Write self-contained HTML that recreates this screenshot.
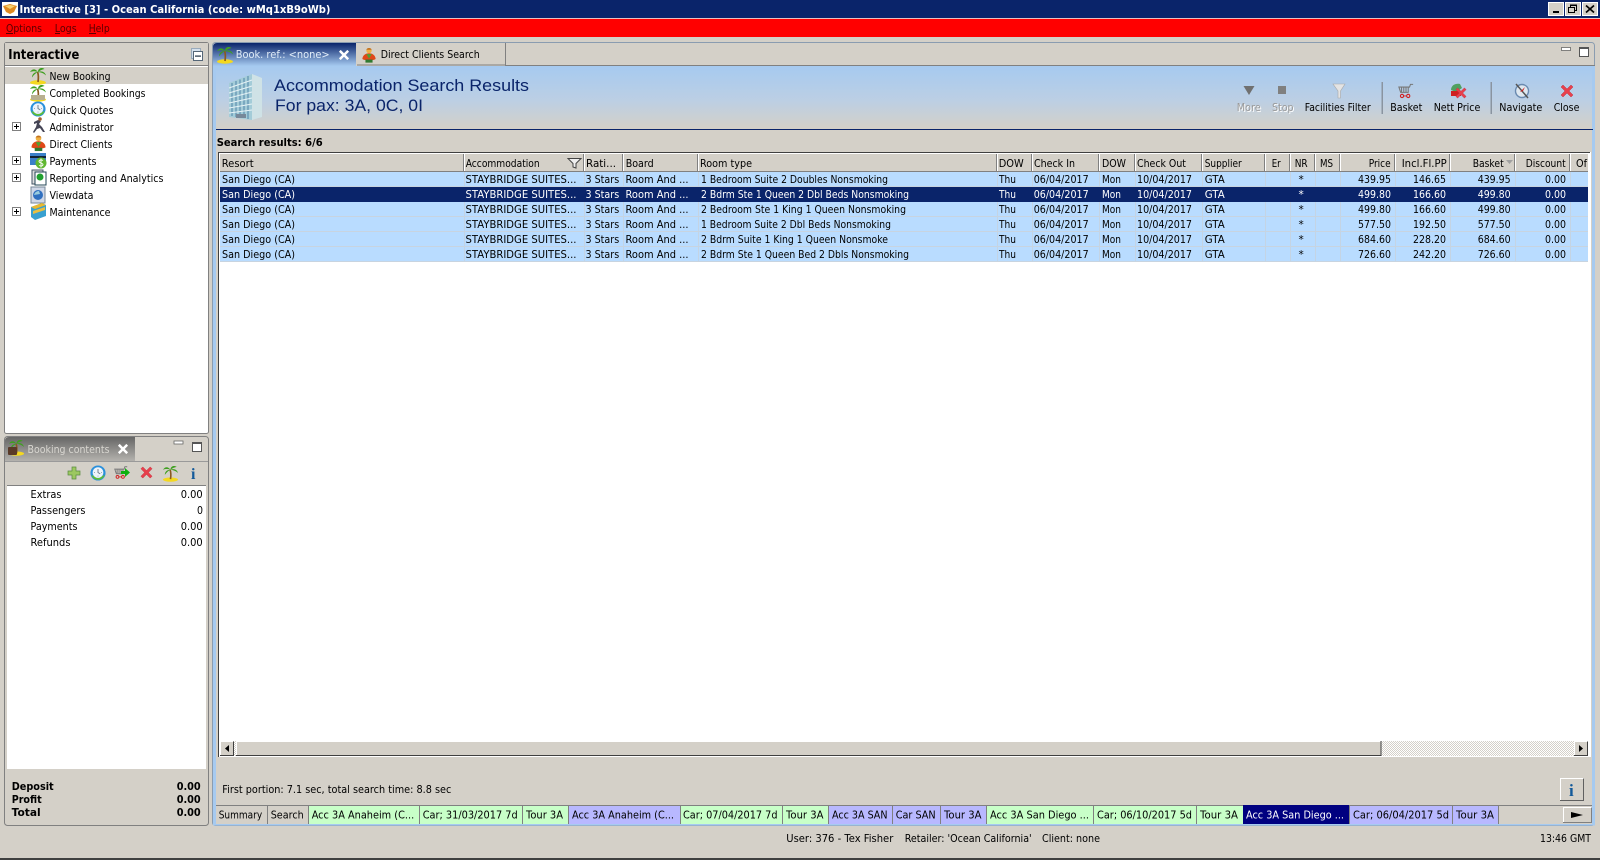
<!DOCTYPE html>
<html lang="en">
<head>
<meta charset="utf-8">
<title>Interactive [3] - Ocean California</title>
<style>
html,body{margin:0;padding:0;background:#d4d0c8;width:1600px;height:860px;overflow:hidden}
svg{display:block}
text{font-family:"DejaVu Sans","Liberation Sans",sans-serif;font-size:10.5px;fill:#000}
.b{font-weight:bold}
</style>
</head>
<body>
<svg xmlns="http://www.w3.org/2000/svg" width="1600" height="860" viewBox="0 0 1600 860">
<defs>
<linearGradient id="bn" x1="0" y1="0" x2="0" y2="1"><stop offset="0" stop-color="#a6caf0"/><stop offset=".55" stop-color="#bccfe4"/><stop offset="1" stop-color="#d4d0c8"/></linearGradient>
<linearGradient id="tb" x1="0" y1="0" x2="0" y2="1"><stop offset="0" stop-color="#0a246a"/><stop offset="1" stop-color="#a6caf0"/></linearGradient>
<linearGradient id="tg" x1="0" y1="0" x2="0" y2="1"><stop offset="0" stop-color="#666"/><stop offset="1" stop-color="#b4b2ae"/></linearGradient>
<pattern id="dit" width="2" height="2" patternUnits="userSpaceOnUse"><rect width="2" height="2" fill="#fff"/><rect width="1" height="1" fill="#d4d0c8"/><rect x="1" y="1" width="1" height="1" fill="#d4d0c8"/></pattern>
<symbol id="palm" viewBox="0 0 18 18"><ellipse cx="9" cy="15.5" rx="8" ry="2.2" fill="#f4d820"/><path d="M9 15C9.6 11 9.6 8 8.6 5" stroke="#8a5a20" stroke-width="1.7" fill="none"/><path d="M9 5C6 1 3 2 1 5C4 4 6 4 9 5ZM9 5C9 1 13 0 15.5 2C13 2.5 11 3.5 9 5ZM9 5C12 3.5 16 4.5 17 8.5C14.5 6 12 5.5 9 5ZM9 5C6 5 3 6.5 3 10.5C5 7.5 7 6 9 5Z" fill="#3f9f20"/></symbol>
<symbol id="clock" viewBox="0 0 18 18"><circle cx="9" cy="9" r="8.500" fill="#2a90dc"/><path d="M1.500 11A7.800 7.800 0 0 0 16.500 11L13 13A5.500 5.500 0 0 1 5 13Z" fill="#60c030"/><circle cx="9" cy="8.500" r="6" fill="#eef4fa"/><path d="M9 4.500V8.500L11.500 10" stroke="#678" stroke-width="1" fill="none"/><path d="M4.500 8.500h1M12.500 8.500h1M9 12v1" stroke="#89a"/></symbol>
<symbol id="rx" viewBox="0 0 14 14"><path d="M1 3L3 1L7 5L11 1L13 3L9 7L13 11L11 13L7 9L3 13L1 11L5 7Z" fill="#e8404c" stroke="#c03040" stroke-width=".5"/></symbol>
<symbol id="client" viewBox="0 0 18 18"><circle cx="9" cy="3.500" r="3" fill="#f0b040"/><path d="M6 2.500C7 0 11 0 12 2.500Z" fill="#c07020"/><path d="M1.500 13C2 8 6 6.500 9 6.500C12 6.500 16 8 16.500 13C14 15 4 15 1.500 13Z" fill="#e04818"/><path d="M6 7.500L9 12.500L12 7.500Z" fill="#50a030"/><rect x="5" y="13.500" width="8" height="3.500" fill="#307a30"/></symbol>
<symbol id="wx" viewBox="0 0 12 12"><path d="M2 2L10 10M10 2L2 10" stroke="#fff" stroke-width="3" stroke-linecap="square" fill="none"/></symbol>
<symbol id="cart" viewBox="0 0 18 18"><path d="M17 1H14L13 4H1L3 10H12" fill="none" stroke="#777" stroke-width="1.200"/><path d="M4 4.500V9.500M6.500 4.500V9.500M9 4.500V9.500M11.500 4.500V9.500" stroke="#777" stroke-width="1.200"/><circle cx="4.500" cy="14" r="1.800" fill="none" stroke="#d02020" stroke-width="1.200"/><circle cx="11.500" cy="14" r="1.800" fill="none" stroke="#d02020" stroke-width="1.200"/><path d="M6.300 14H9.700" stroke="#d02020"/></symbol>
</defs>

<rect width="1600" height="860" fill="#d4d0c8"/>

<!-- title bar -->
<rect width="1600" height="18" fill="#0a246a"/>
<rect y="18" width="1600" height="1" fill="#e8c0c0"/>
<rect x="2" y="2" width="16" height="14" fill="#fff"/>
<path d="M3 6L10 4L17 6L14 12L10 14L6 12Z" fill="#e08a20"/><path d="M5 6L10 5L15 6L10 9Z" fill="#f8d070"/>
<text class="b" x="19.500" y="13" textLength="311" lengthAdjust="spacingAndGlyphs" style="fill:#fff">Interactive [3] - Ocean California (code: wMq1xB9oWb)</text>
<g>
<rect x="1548.500" y="2.500" width="15" height="13" fill="#d4d0c8" stroke="#fff"/><rect x="1553" y="11" width="6" height="2" fill="#000"/>
<rect x="1565.500" y="2.500" width="15" height="13" fill="#d4d0c8" stroke="#fff"/><path d="M1570.500 5.500h6v5h-2M1570.500 5.500v2M1568.500 7.500h6v5h-6Z" fill="none" stroke="#000"/><rect x="1570" y="4.500" width="7" height="1.500"/>
<rect x="1582.500" y="2.500" width="15" height="13" fill="#d4d0c8" stroke="#fff"/><path d="M1586 5.500L1594 12.500M1594 5.500L1586 12.500" stroke="#000" stroke-width="1.700"/>
</g>

<!-- menu -->
<rect y="19" width="1600" height="18" fill="#ff0000"/>
<text x="6" y="32" textLength="36" lengthAdjust="spacingAndGlyphs" style="fill:#5a0000">Options</text>
<text x="54.700" y="32" textLength="22" lengthAdjust="spacingAndGlyphs" style="fill:#5a0000">Logs</text>
<text x="88.700" y="32" textLength="21" lengthAdjust="spacingAndGlyphs" style="fill:#5a0000">Help</text>
<rect x="6" y="33" width="7" height="1" fill="#5a0000"/><rect x="55" y="33" width="5" height="1" fill="#5a0000"/><rect x="89" y="33" width="7" height="1" fill="#5a0000"/>

<!-- left top panel -->
<rect x="4.500" y="42.500" width="204" height="391" rx="2" fill="#fff" stroke="#808080"/>
<rect x="5" y="43" width="203" height="22" fill="#d4d0c8"/>
<rect x="5" y="65" width="203" height="1" fill="#808080"/>
<text class="b" x="8.300" y="59" textLength="71" lengthAdjust="spacingAndGlyphs" style="font-size:13px">Interactive</text>
<rect x="191.500" y="48.500" width="9" height="10" fill="#d4e0ec" stroke="#9ab"/>
<rect x="193.500" y="51.500" width="9" height="9" fill="#fff" stroke="#567"/><rect x="195" y="55.500" width="6" height="1.200" fill="#234"/>
<rect x="5" y="67" width="203" height="17" fill="#d4d0c8"/>
<use href="#palm" x="29" y="67" width="18" height="18"/>
<use href="#palm" x="29" y="84" width="18" height="18"/><rect x="31" y="95" width="14" height="5" fill="#b8b090"/>
<use href="#clock" x="30" y="101" width="16" height="16"/>
<path d="M38 120l3 1-2 3 3 3 3 5-2 0-3-4-3 1-3 4-1-1 3-5 1-4-3 1 0-2 4-2Z" fill="#445"/><circle cx="40" cy="119" r="1.800" fill="#a06030"/>
<use href="#client" x="30" y="135" width="17" height="17"/>
<rect x="30" y="153" width="16" height="12" fill="#3a80c8"/><rect x="30" y="156" width="16" height="2" fill="#123"/><circle cx="41" cy="163" r="5.500" fill="#60b830"/><path d="M43 160.500C41 159.500 39 160 39 161.500C39 163 43 163 43 164.500C43 166 41 166.500 39 165.500M41 158.500V167.500" stroke="#fff" fill="none" stroke-width=".9"/>
<rect x="32" y="170" width="11" height="14" fill="#ddd" stroke="#456"/><rect x="35" y="172" width="11" height="13" fill="#fff" stroke="#245"/><circle cx="40" cy="177" r="3.500" fill="#20a030"/>
<rect x="31" y="187" width="14" height="16" fill="#d0d8e8" stroke="#789"/><circle cx="38" cy="195" r="5" fill="#3070c0"/><path d="M34 195a5 5 0 0 1 5-4l1 3Z" fill="#9cd"/>
<path d="M31 207L42 203L46 205V216L35 220L31 217Z" fill="#38a0d0"/><path d="M31 207L42 203L46 205L35 209Z" fill="#e8b830"/><path d="M33 211L45 207V210L33 214Z" fill="#e8c040"/>
<g>
<text x="49.500" y="80" textLength="61" lengthAdjust="spacingAndGlyphs">New Booking</text>
<text x="49.500" y="97" textLength="96" lengthAdjust="spacingAndGlyphs">Completed Bookings</text>
<text x="49.500" y="114" textLength="64" lengthAdjust="spacingAndGlyphs">Quick Quotes</text>
<text x="49.500" y="131" textLength="64" lengthAdjust="spacingAndGlyphs">Administrator</text>
<text x="49.500" y="148" textLength="63" lengthAdjust="spacingAndGlyphs">Direct Clients</text>
<text x="49.500" y="165" textLength="47" lengthAdjust="spacingAndGlyphs">Payments</text>
<text x="49.500" y="182" textLength="114" lengthAdjust="spacingAndGlyphs">Reporting and Analytics</text>
<text x="49.500" y="199" textLength="44" lengthAdjust="spacingAndGlyphs">Viewdata</text>
<text x="49.500" y="216" textLength="61" lengthAdjust="spacingAndGlyphs">Maintenance</text>
</g>
<g fill="#fff" stroke="#808080">
<rect x="12.500" y="122.500" width="8" height="8"/><rect x="12.500" y="156.500" width="8" height="8"/><rect x="12.500" y="173.500" width="8" height="8"/><rect x="12.500" y="207.500" width="8" height="8"/>
</g>
<path d="M14 126.500h5M16.500 124v5M14 160.500h5M16.500 158v5M14 177.500h5M16.500 175v5M14 211.500h5M16.500 209v5" stroke="#000"/>

<!-- left bottom panel -->
<rect x="4.500" y="436.500" width="204" height="389" rx="3" fill="#d4d0c8" stroke="#808080"/>
<path d="M5 461V441Q5 437 9 437H135V461Z" fill="url(#tg)"/>
<rect x="5" y="461" width="203" height="1" fill="#9a9a9a"/>
<rect x="174" y="441" width="9" height="3" fill="#fff" stroke="#666" stroke-width=".8"/>
<rect x="192.500" y="442.500" width="9" height="9" fill="#fff" stroke="#555"/><rect x="192" y="442" width="10" height="2" fill="#555"/>
<use href="#palm" x="8" y="439" width="17" height="17"/><rect x="8" y="447" width="9" height="8" rx="1" fill="#5a3a28"/>
<text x="27.500" y="453" textLength="82" lengthAdjust="spacingAndGlyphs" style="fill:#d8d6d0">Booking contents</text>
<use href="#wx" x="118" y="444" width="10" height="10"/>
<rect x="7" y="485" width="199" height="1" fill="#808080"/>
<path d="M72 467h4v4h4v4h-4v4h-4v-4h-4v-4h4Z" fill="#9cc860" stroke="#5a8a40" stroke-width=".7"/>
<use href="#clock" x="90" y="465" width="16" height="16"/>
<use href="#cart" x="114" y="465" width="14" height="16"/><path d="M121 471h4v-3l5 4.500-5 4.500v-3h-4Z" fill="#10b010"/>
<use href="#rx" x="140" y="466" width="13" height="13"/>
<use href="#palm" x="162" y="465" width="17" height="17"/>
<text x="191" y="479" class="b" style="font-family:'Liberation Serif',serif;font-size:16px;fill:#145a9a">i</text>
<rect x="7" y="486" width="199" height="283" fill="#fff"/>
<text x="30.500" y="498" textLength="31" lengthAdjust="spacingAndGlyphs">Extras</text>
<text x="30.500" y="514" textLength="55" lengthAdjust="spacingAndGlyphs">Passengers</text>
<text x="30.500" y="530" textLength="47" lengthAdjust="spacingAndGlyphs">Payments</text>
<text x="30.500" y="546" textLength="40" lengthAdjust="spacingAndGlyphs">Refunds</text>
<text x="180.700" y="498" textLength="22" lengthAdjust="spacingAndGlyphs">0.00</text>
<text x="197" y="514" textLength="6" lengthAdjust="spacingAndGlyphs">0</text>
<text x="180.700" y="530" textLength="22" lengthAdjust="spacingAndGlyphs">0.00</text>
<text x="180.700" y="546" textLength="22" lengthAdjust="spacingAndGlyphs">0.00</text>
<text class="b" x="11.700" y="790" textLength="42" lengthAdjust="spacingAndGlyphs">Deposit</text>
<text class="b" x="11.700" y="803" textLength="30" lengthAdjust="spacingAndGlyphs">Profit</text>
<text class="b" x="11.700" y="816" textLength="29" lengthAdjust="spacingAndGlyphs">Total</text>
<text class="b" x="176.700" y="790" textLength="24" lengthAdjust="spacingAndGlyphs">0.00</text>
<text class="b" x="176.700" y="803" textLength="24" lengthAdjust="spacingAndGlyphs">0.00</text>
<text class="b" x="176.700" y="816" textLength="24" lengthAdjust="spacingAndGlyphs">0.00</text>

<!-- main panel -->
<rect x="212.500" y="42.500" width="1382" height="783" rx="3" fill="#d4d0c8" stroke="#8a9cb0"/>
<rect x="213" y="66" width="3" height="759" fill="#a6caf0"/>
<rect x="1592" y="66" width="3" height="759" fill="#a6caf0"/>
<rect x="213" y="823" width="1382" height="2" fill="#a6caf0"/>
<rect x="505" y="65" width="1090" height="1" fill="#808080"/>
<rect x="357" y="43" width="148" height="22" fill="#d4d0c8"/>
<path d="M505.500 43V65M357 65H505" stroke="#808080" fill="none"/>
<path d="M213 66V47Q213 43 217 43H356V66Z" fill="url(#tb)"/>
<use href="#palm" x="216" y="46" width="18" height="18"/>
<text x="235.700" y="58" textLength="94" lengthAdjust="spacingAndGlyphs" style="fill:#e0ecf8">Book. ref.: &lt;none&gt;</text>
<use href="#wx" x="339" y="50" width="10" height="10"/>
<use href="#client" x="361" y="47" width="16" height="17"/>
<text x="380.700" y="58" textLength="99" lengthAdjust="spacingAndGlyphs">Direct Clients Search</text>
<rect x="1561.500" y="47.500" width="9" height="3" fill="#fff" stroke="#666" stroke-width=".8"/>
<rect x="1579.500" y="47.500" width="9" height="9" fill="#fff" stroke="#555"/><rect x="1579" y="47" width="10" height="2" fill="#555"/>

<rect x="216" y="66" width="1376" height="63" fill="url(#bn)"/>
<rect x="216" y="129" width="1377" height="1" fill="#0a246a"/>
<!-- building -->
<path d="M229 83L252 74V120L229 117Z" fill="#a4ccd8"/><path d="M252 74L262 78V117L252 120Z" fill="#cfe2e6"/>
<g stroke="#5f90b0" stroke-width="1.200" fill="none"><path d="M232 83V116M236 81V117M240 79.500V117.500M244 78V118M248 76V119"/></g>
<g stroke="#e6f2f6" stroke-width="1" fill="none"><path d="M229 88L252 80M229 93L252 86M229 98L252 92M229 103L252 98M229 108L252 104M229 113L252 110"/></g>
<rect x="236" y="114" width="10" height="4" fill="#789"/>
<text x="274" y="91" textLength="255" lengthAdjust="spacingAndGlyphs" style="font-family:'Liberation Sans',sans-serif;font-size:17px;fill:#0a246a">Accommodation Search Results</text>
<text x="275" y="111" textLength="148" lengthAdjust="spacingAndGlyphs" style="font-family:'Liberation Sans',sans-serif;font-size:17px;fill:#0a246a">For pax: 3A, 0C, 0I</text>

<!-- banner toolbar -->
<path d="M1243.500 86H1254.500L1249 95Z" fill="#707070"/>
<rect x="1278" y="86" width="8" height="8" fill="#808080"/>
<path d="M1333 84H1345L1340.500 91V98H1338V91Z" fill="#e4e4e4" stroke="#a8a8a8" stroke-width=".6"/>
<use href="#cart" x="1398" y="83" width="16" height="17"/>
<path d="M1451 90C1451 85 1456 83 1460 84L1462 88L1456 92Z" fill="#50a060"/><rect x="1451" y="91" width="10" height="5" fill="#d02020"/><use href="#rx" x="1455" y="87" width="12" height="12"/>
<circle cx="1522" cy="91" r="6.500" fill="#dfe8f0" stroke="#6a8ab0" stroke-width="1.400"/><path d="M1516 84L1528 98" stroke="#555" stroke-width="1.500"/><path d="M1525 87L1520 92L1523 91Z" fill="#d02020"/>
<use href="#rx" x="1560" y="84" width="14" height="14"/>
<g>
<text x="1237.700" y="112" textLength="24" lengthAdjust="spacingAndGlyphs" style="fill:#fff">More</text>
<text x="1273" y="112" textLength="21.500" lengthAdjust="spacingAndGlyphs" style="fill:#fff">Stop</text>
<text x="1236.700" y="111" textLength="24" lengthAdjust="spacingAndGlyphs" style="fill:#999">More</text>
<text x="1272" y="111" textLength="21.500" lengthAdjust="spacingAndGlyphs" style="fill:#999">Stop</text>
<text x="1304.700" y="111" textLength="66" lengthAdjust="spacingAndGlyphs">Facilities Filter</text>
<text x="1390.300" y="111" textLength="32" lengthAdjust="spacingAndGlyphs">Basket</text>
<text x="1433.700" y="111" textLength="46.700" lengthAdjust="spacingAndGlyphs">Nett Price</text>
<text x="1499.300" y="111" textLength="43" lengthAdjust="spacingAndGlyphs">Navigate</text>
<text x="1553.700" y="111" textLength="25.700" lengthAdjust="spacingAndGlyphs">Close</text>
</g>
<rect x="1381.500" y="82" width="1.500" height="32" fill="#8a94a0"/><rect x="1490.500" y="82" width="1.500" height="32" fill="#8a94a0"/>

<text class="b" x="216.700" y="146" textLength="106" lengthAdjust="spacingAndGlyphs">Search results: 6/6</text>

<!-- table -->
<rect x="218.500" y="152.500" width="1372" height="604" fill="#fff" stroke="#fff"/>
<path d="M218.500 757V152.500H1590" stroke="#404040" fill="none"/>
<rect x="220" y="154" width="1368" height="17" fill="#d4d0c8"/>
<rect x="220" y="171" width="1368" height="1" fill="#808080"/>
<rect x="220" y="172" width="1368" height="90" fill="#b9dcff"/>
<rect x="220" y="187" width="1368" height="15" fill="#0a246a"/>
<path d="M220 186.500H1588M220 216.500H1588M220 231.500H1588M220 246.500H1588M220 261.500H1588" stroke="#c8d4e0"/>
<g stroke="#c4d4e4">
<path d="M464.500 172V187M584.500 172V187M623.500 172V187M698.500 172V187M997.500 172V187M1032.500 172V187M1099.500 172V187M1135.500 172V187M1202.500 172V187M1265.500 172V187M1290.500 172V187M1315.500 172V187M1340.500 172V187M1395.500 172V187M1450.500 172V187M1515.500 172V187M1570.500 172V187"/>
<path d="M464.500 202V262M584.500 202V262M623.500 202V262M698.500 202V262M997.500 202V262M1032.500 202V262M1099.500 202V262M1135.500 202V262M1202.500 202V262M1265.500 202V262M1290.500 202V262M1315.500 202V262M1340.500 202V262M1395.500 202V262M1450.500 202V262M1515.500 202V262M1570.500 202V262"/>
</g>
<g stroke="#808080">
<path d="M463.500 154V171M583.500 154V171M622.500 154V171M697.500 154V171M996.500 154V171M1031.500 154V171M1098.500 154V171M1134.500 154V171M1201.500 154V171M1264.500 154V171M1289.500 154V171M1314.500 154V171M1339.500 154V171M1394.500 154V171M1449.500 154V171M1514.500 154V171M1569.500 154V171"/>
</g>
<g stroke="#fff">
<path d="M464.500 154V171M584.500 154V171M623.500 154V171M698.500 154V171M997.500 154V171M1032.500 154V171M1099.500 154V171M1135.500 154V171M1202.500 154V171M1265.500 154V171M1290.500 154V171M1315.500 154V171M1340.500 154V171M1395.500 154V171M1450.500 154V171M1515.500 154V171M1570.500 154V171"/>
</g>
<path d="M568 158.500H581L576 163.500V168L573 167V163.500Z" fill="#eee" stroke="#444"/>
<path d="M1506 160H1513L1509.500 164Z" fill="#a0a0a0"/>
<g>
<text x="221.700" y="167" textLength="32" lengthAdjust="spacingAndGlyphs">Resort</text>
<text x="465.700" y="167" textLength="74" lengthAdjust="spacingAndGlyphs">Accommodation</text>
<text x="586" y="167" textLength="30" lengthAdjust="spacingAndGlyphs">Rati...</text>
<text x="625.700" y="167" textLength="28" lengthAdjust="spacingAndGlyphs">Board</text>
<text x="700" y="167" textLength="52" lengthAdjust="spacingAndGlyphs">Room type</text>
<text x="998.700" y="167" textLength="25" lengthAdjust="spacingAndGlyphs">DOW</text>
<text x="1034" y="167" textLength="41" lengthAdjust="spacingAndGlyphs">Check In</text>
<text x="1102" y="167" textLength="24" lengthAdjust="spacingAndGlyphs">DOW</text>
<text x="1137" y="167" textLength="49" lengthAdjust="spacingAndGlyphs">Check Out</text>
<text x="1204.700" y="167" textLength="37" lengthAdjust="spacingAndGlyphs">Supplier</text>
<text x="1271.700" y="167" textLength="9" lengthAdjust="spacingAndGlyphs">Er</text>
<text x="1294.700" y="167" textLength="13" lengthAdjust="spacingAndGlyphs">NR</text>
<text x="1320" y="167" textLength="13" lengthAdjust="spacingAndGlyphs">MS</text>
<text x="1368.700" y="167" textLength="22" lengthAdjust="spacingAndGlyphs">Price</text>
<text x="1401.700" y="167" textLength="45" lengthAdjust="spacingAndGlyphs">Incl.Fl.PP</text>
<text x="1472.700" y="167" textLength="31" lengthAdjust="spacingAndGlyphs">Basket</text>
<text x="1525.700" y="167" textLength="40" lengthAdjust="spacingAndGlyphs">Discount</text>
<text x="1576" y="167" textLength="11" lengthAdjust="spacingAndGlyphs">Of</text>
</g>

<!-- row 1 -->
<g>
<text x="222" y="183" textLength="73" lengthAdjust="spacingAndGlyphs">San Diego (CA)</text>
<text x="465.500" y="183" textLength="111" lengthAdjust="spacingAndGlyphs">STAYBRIDGE SUITES...</text>
<text x="585.500" y="183" textLength="33.700" lengthAdjust="spacingAndGlyphs">3 Stars</text>
<text x="625.500" y="183" textLength="63" lengthAdjust="spacingAndGlyphs">Room And ...</text>
<text x="701" y="183" textLength="187" lengthAdjust="spacingAndGlyphs">1 Bedroom Suite 2 Doubles Nonsmoking</text>
<text x="999" y="183" textLength="17" lengthAdjust="spacingAndGlyphs">Thu</text>
<text x="1033.700" y="183" textLength="55" lengthAdjust="spacingAndGlyphs">06/04/2017</text>
<text x="1102" y="183" textLength="19" lengthAdjust="spacingAndGlyphs">Mon</text>
<text x="1137" y="183" textLength="55" lengthAdjust="spacingAndGlyphs">10/04/2017</text>
<text x="1204.700" y="183" textLength="20" lengthAdjust="spacingAndGlyphs">GTA</text>
<text x="1298.500" y="183">*</text>
<text x="1358" y="183" textLength="33" lengthAdjust="spacingAndGlyphs">439.95</text>
<text x="1413" y="183" textLength="33" lengthAdjust="spacingAndGlyphs">146.65</text>
<text x="1477.700" y="183" textLength="33" lengthAdjust="spacingAndGlyphs">439.95</text>
<text x="1545" y="183" textLength="21" lengthAdjust="spacingAndGlyphs">0.00</text>
</g>
<!-- row 2 selected -->
<g>
<text style="fill:#fff" x="222" y="198" textLength="73" lengthAdjust="spacingAndGlyphs">San Diego (CA)</text>
<text style="fill:#fff" x="465.500" y="198" textLength="111" lengthAdjust="spacingAndGlyphs">STAYBRIDGE SUITES...</text>
<text style="fill:#fff" x="585.500" y="198" textLength="33.700" lengthAdjust="spacingAndGlyphs">3 Stars</text>
<text style="fill:#fff" x="625.500" y="198" textLength="63" lengthAdjust="spacingAndGlyphs">Room And ...</text>
<text style="fill:#fff" x="701" y="198" textLength="208" lengthAdjust="spacingAndGlyphs">2 Bdrm Ste 1 Queen 2 Dbl Beds Nonsmoking</text>
<text style="fill:#fff" x="999" y="198" textLength="17" lengthAdjust="spacingAndGlyphs">Thu</text>
<text style="fill:#fff" x="1033.700" y="198" textLength="55" lengthAdjust="spacingAndGlyphs">06/04/2017</text>
<text style="fill:#fff" x="1102" y="198" textLength="19" lengthAdjust="spacingAndGlyphs">Mon</text>
<text style="fill:#fff" x="1137" y="198" textLength="55" lengthAdjust="spacingAndGlyphs">10/04/2017</text>
<text style="fill:#fff" x="1204.700" y="198" textLength="20" lengthAdjust="spacingAndGlyphs">GTA</text>
<text style="fill:#fff" x="1298.500" y="198">*</text>
<text style="fill:#fff" x="1358" y="198" textLength="33" lengthAdjust="spacingAndGlyphs">499.80</text>
<text style="fill:#fff" x="1413" y="198" textLength="33" lengthAdjust="spacingAndGlyphs">166.60</text>
<text style="fill:#fff" x="1477.700" y="198" textLength="33" lengthAdjust="spacingAndGlyphs">499.80</text>
<text style="fill:#fff" x="1545" y="198" textLength="21" lengthAdjust="spacingAndGlyphs">0.00</text>
</g>
<!-- row 3 -->
<g>
<text x="222" y="213" textLength="73" lengthAdjust="spacingAndGlyphs">San Diego (CA)</text>
<text x="465.500" y="213" textLength="111" lengthAdjust="spacingAndGlyphs">STAYBRIDGE SUITES...</text>
<text x="585.500" y="213" textLength="33.700" lengthAdjust="spacingAndGlyphs">3 Stars</text>
<text x="625.500" y="213" textLength="63" lengthAdjust="spacingAndGlyphs">Room And ...</text>
<text x="701" y="213" textLength="205" lengthAdjust="spacingAndGlyphs">2 Bedroom Ste 1 King 1 Queen Nonsmoking</text>
<text x="999" y="213" textLength="17" lengthAdjust="spacingAndGlyphs">Thu</text>
<text x="1033.700" y="213" textLength="55" lengthAdjust="spacingAndGlyphs">06/04/2017</text>
<text x="1102" y="213" textLength="19" lengthAdjust="spacingAndGlyphs">Mon</text>
<text x="1137" y="213" textLength="55" lengthAdjust="spacingAndGlyphs">10/04/2017</text>
<text x="1204.700" y="213" textLength="20" lengthAdjust="spacingAndGlyphs">GTA</text>
<text x="1298.500" y="213">*</text>
<text x="1358" y="213" textLength="33" lengthAdjust="spacingAndGlyphs">499.80</text>
<text x="1413" y="213" textLength="33" lengthAdjust="spacingAndGlyphs">166.60</text>
<text x="1477.700" y="213" textLength="33" lengthAdjust="spacingAndGlyphs">499.80</text>
<text x="1545" y="213" textLength="21" lengthAdjust="spacingAndGlyphs">0.00</text>
</g>
<!-- row 4 -->
<g>
<text x="222" y="228" textLength="73" lengthAdjust="spacingAndGlyphs">San Diego (CA)</text>
<text x="465.500" y="228" textLength="111" lengthAdjust="spacingAndGlyphs">STAYBRIDGE SUITES...</text>
<text x="585.500" y="228" textLength="33.700" lengthAdjust="spacingAndGlyphs">3 Stars</text>
<text x="625.500" y="228" textLength="63" lengthAdjust="spacingAndGlyphs">Room And ...</text>
<text x="701" y="228" textLength="190" lengthAdjust="spacingAndGlyphs">1 Bedroom Suite 2 Dbl Beds Nonsmoking</text>
<text x="999" y="228" textLength="17" lengthAdjust="spacingAndGlyphs">Thu</text>
<text x="1033.700" y="228" textLength="55" lengthAdjust="spacingAndGlyphs">06/04/2017</text>
<text x="1102" y="228" textLength="19" lengthAdjust="spacingAndGlyphs">Mon</text>
<text x="1137" y="228" textLength="55" lengthAdjust="spacingAndGlyphs">10/04/2017</text>
<text x="1204.700" y="228" textLength="20" lengthAdjust="spacingAndGlyphs">GTA</text>
<text x="1298.500" y="228">*</text>
<text x="1358" y="228" textLength="33" lengthAdjust="spacingAndGlyphs">577.50</text>
<text x="1413" y="228" textLength="33" lengthAdjust="spacingAndGlyphs">192.50</text>
<text x="1477.700" y="228" textLength="33" lengthAdjust="spacingAndGlyphs">577.50</text>
<text x="1545" y="228" textLength="21" lengthAdjust="spacingAndGlyphs">0.00</text>
</g>
<!-- row 5 -->
<g>
<text x="222" y="243" textLength="73" lengthAdjust="spacingAndGlyphs">San Diego (CA)</text>
<text x="465.500" y="243" textLength="111" lengthAdjust="spacingAndGlyphs">STAYBRIDGE SUITES...</text>
<text x="585.500" y="243" textLength="33.700" lengthAdjust="spacingAndGlyphs">3 Stars</text>
<text x="625.500" y="243" textLength="63" lengthAdjust="spacingAndGlyphs">Room And ...</text>
<text x="701" y="243" textLength="187" lengthAdjust="spacingAndGlyphs">2 Bdrm Suite 1 King 1 Queen Nonsmoke</text>
<text x="999" y="243" textLength="17" lengthAdjust="spacingAndGlyphs">Thu</text>
<text x="1033.700" y="243" textLength="55" lengthAdjust="spacingAndGlyphs">06/04/2017</text>
<text x="1102" y="243" textLength="19" lengthAdjust="spacingAndGlyphs">Mon</text>
<text x="1137" y="243" textLength="55" lengthAdjust="spacingAndGlyphs">10/04/2017</text>
<text x="1204.700" y="243" textLength="20" lengthAdjust="spacingAndGlyphs">GTA</text>
<text x="1298.500" y="243">*</text>
<text x="1358" y="243" textLength="33" lengthAdjust="spacingAndGlyphs">684.60</text>
<text x="1413" y="243" textLength="33" lengthAdjust="spacingAndGlyphs">228.20</text>
<text x="1477.700" y="243" textLength="33" lengthAdjust="spacingAndGlyphs">684.60</text>
<text x="1545" y="243" textLength="21" lengthAdjust="spacingAndGlyphs">0.00</text>
</g>
<!-- row 6 -->
<g>
<text x="222" y="258" textLength="73" lengthAdjust="spacingAndGlyphs">San Diego (CA)</text>
<text x="465.500" y="258" textLength="111" lengthAdjust="spacingAndGlyphs">STAYBRIDGE SUITES...</text>
<text x="585.500" y="258" textLength="33.700" lengthAdjust="spacingAndGlyphs">3 Stars</text>
<text x="625.500" y="258" textLength="63" lengthAdjust="spacingAndGlyphs">Room And ...</text>
<text x="701" y="258" textLength="208" lengthAdjust="spacingAndGlyphs">2 Bdrm Ste 1 Queen Bed 2 Dbls Nonsmoking</text>
<text x="999" y="258" textLength="17" lengthAdjust="spacingAndGlyphs">Thu</text>
<text x="1033.700" y="258" textLength="55" lengthAdjust="spacingAndGlyphs">06/04/2017</text>
<text x="1102" y="258" textLength="19" lengthAdjust="spacingAndGlyphs">Mon</text>
<text x="1137" y="258" textLength="55" lengthAdjust="spacingAndGlyphs">10/04/2017</text>
<text x="1204.700" y="258" textLength="20" lengthAdjust="spacingAndGlyphs">GTA</text>
<text x="1298.500" y="258">*</text>
<text x="1358" y="258" textLength="33" lengthAdjust="spacingAndGlyphs">726.60</text>
<text x="1413" y="258" textLength="33" lengthAdjust="spacingAndGlyphs">242.20</text>
<text x="1477.700" y="258" textLength="33" lengthAdjust="spacingAndGlyphs">726.60</text>
<text x="1545" y="258" textLength="21" lengthAdjust="spacingAndGlyphs">0.00</text>
</g>

<!-- scrollbar -->
<rect x="220" y="741" width="1368" height="15" fill="url(#dit)"/>
<rect x="220" y="741" width="14" height="15" fill="#d4d0c8"/>
<path d="M220.500 755V741.500H233" stroke="#fff" fill="none"/><path d="M233.500 741.500V755.500H220" stroke="#404040" fill="none"/>
<path d="M229 745V752L225 748.500Z" fill="#000"/>
<rect x="236" y="741" width="1145" height="15" fill="#d4d0c8"/>
<path d="M236.500 755V741.500H1381" stroke="#fff" fill="none"/><path d="M1381 741V755.500H236" stroke="#404040" fill="none"/>
<rect x="1574" y="741" width="14" height="15" fill="#d4d0c8"/>
<path d="M1574.500 755V741.500H1588" stroke="#fff" fill="none"/><path d="M1587.500 741.500V755.500H1574" stroke="#404040" fill="none"/>
<path d="M1579 745V752L1583 748.500Z" fill="#000"/>

<text x="222.300" y="793" textLength="229" lengthAdjust="spacingAndGlyphs">First portion: 7.1 sec, total search time: 8.8 sec</text>

<rect x="1560" y="778" width="24" height="23" fill="#d4d0c8"/>
<path d="M1560.500 800V778.500H1584" stroke="#fff" fill="none"/><path d="M1583.500 778.500V800.500H1560" stroke="#606060" fill="none"/>
<text x="1569" y="796" class="b" style="font-family:'Liberation Serif',serif;font-size:17px;fill:#145a9a">i</text>

<!-- bottom tabs -->
<rect x="216" y="805" width="1376" height="1" fill="#808080"/>
<rect x="216" y="806" width="1376" height="18" fill="#d4d0c8"/>
<rect x="308" y="806" width="111" height="18" fill="#c8ffc8"/>
<rect x="419" y="806" width="103" height="18" fill="#c8ffc8"/>
<rect x="522" y="806" width="46" height="18" fill="#c8ffc8"/>
<rect x="568" y="806" width="112" height="18" fill="#b8b8ff"/>
<rect x="680" y="806" width="102" height="18" fill="#c8ffc8"/>
<rect x="782" y="806" width="46" height="18" fill="#c8ffc8"/>
<rect x="828" y="806" width="64" height="18" fill="#b8b8ff"/>
<rect x="892" y="806" width="48" height="18" fill="#b8b8ff"/>
<rect x="940" y="806" width="46" height="18" fill="#b8b8ff"/>
<rect x="986" y="806" width="107" height="18" fill="#c8ffc8"/>
<rect x="1093" y="806" width="103" height="18" fill="#c8ffc8"/>
<rect x="1196" y="806" width="47" height="18" fill="#c8ffc8"/>
<rect x="1243" y="805" width="106" height="19" fill="#000080"/>
<rect x="1349" y="806" width="103" height="18" fill="#b8b8ff"/>
<rect x="1452" y="806" width="46" height="18" fill="#b8b8ff"/>
<path d="M267.500 806V824M308.500 806V824M419.500 806V824M522.500 806V824M568.500 806V824M680.500 806V824M782.500 806V824M828.500 806V824M892.500 806V824M940.500 806V824M986.500 806V824M1093.500 806V824M1196.500 806V824M1349.500 806V824M1452.500 806V824M1498.500 806V824" stroke="#808080"/>
<rect x="213" y="824" width="1382" height="1.500" fill="#a6caf0"/>
<g>
<text x="218.700" y="818.500" textLength="43.500" lengthAdjust="spacingAndGlyphs">Summary</text>
<text x="270.700" y="818.500" textLength="33" lengthAdjust="spacingAndGlyphs">Search</text>
<text x="311.700" y="818.500" textLength="102.500" lengthAdjust="spacingAndGlyphs">Acc 3A Anaheim (C...</text>
<text x="422.700" y="818.500" textLength="95" lengthAdjust="spacingAndGlyphs">Car; 31/03/2017 7d</text>
<text x="526" y="818.500" textLength="37" lengthAdjust="spacingAndGlyphs">Tour 3A</text>
<text x="572" y="818.500" textLength="102" lengthAdjust="spacingAndGlyphs">Acc 3A Anaheim (C...</text>
<text x="683" y="818.500" textLength="94.500" lengthAdjust="spacingAndGlyphs">Car; 07/04/2017 7d</text>
<text x="786" y="818.500" textLength="37.500" lengthAdjust="spacingAndGlyphs">Tour 3A</text>
<text x="832" y="818.500" textLength="55.500" lengthAdjust="spacingAndGlyphs">Acc 3A SAN</text>
<text x="895.700" y="818.500" textLength="40" lengthAdjust="spacingAndGlyphs">Car SAN</text>
<text x="944" y="818.500" textLength="37.500" lengthAdjust="spacingAndGlyphs">Tour 3A</text>
<text x="990" y="818.500" textLength="99" lengthAdjust="spacingAndGlyphs">Acc 3A San Diego ...</text>
<text x="1097" y="818.500" textLength="95" lengthAdjust="spacingAndGlyphs">Car; 06/10/2017 5d</text>
<text x="1200" y="818.500" textLength="38" lengthAdjust="spacingAndGlyphs">Tour 3A</text>
<text x="1246" y="818.500" textLength="98" lengthAdjust="spacingAndGlyphs" style="fill:#fff">Acc 3A San Diego ...</text>
<text x="1353" y="818.500" textLength="96" lengthAdjust="spacingAndGlyphs">Car; 06/04/2017 5d</text>
<text x="1456" y="818.500" textLength="38" lengthAdjust="spacingAndGlyphs">Tour 3A</text>
</g>
<rect x="1563" y="807" width="29" height="16" fill="#d4d0c8"/>
<path d="M1563.500 822V807.500H1592" stroke="#fff" fill="none"/><path d="M1591.500 807.500V822.500H1563" stroke="#808080" fill="none"/>
<path d="M1571 812L1583 815L1571 818Z" fill="#000"/>

<!-- status bar -->
<text x="786.300" y="842" textLength="107" lengthAdjust="spacingAndGlyphs">User: 376 - Tex Fisher</text>
<text x="904.700" y="842" textLength="127" lengthAdjust="spacingAndGlyphs">Retailer: 'Ocean California'</text>
<text x="1042" y="842" textLength="58" lengthAdjust="spacingAndGlyphs">Client: none</text>
<text x="1540" y="842" textLength="51" lengthAdjust="spacingAndGlyphs">13:46 GMT</text>
<rect y="858" width="1600" height="2" fill="#404040"/>
</svg>
</body>
</html>
